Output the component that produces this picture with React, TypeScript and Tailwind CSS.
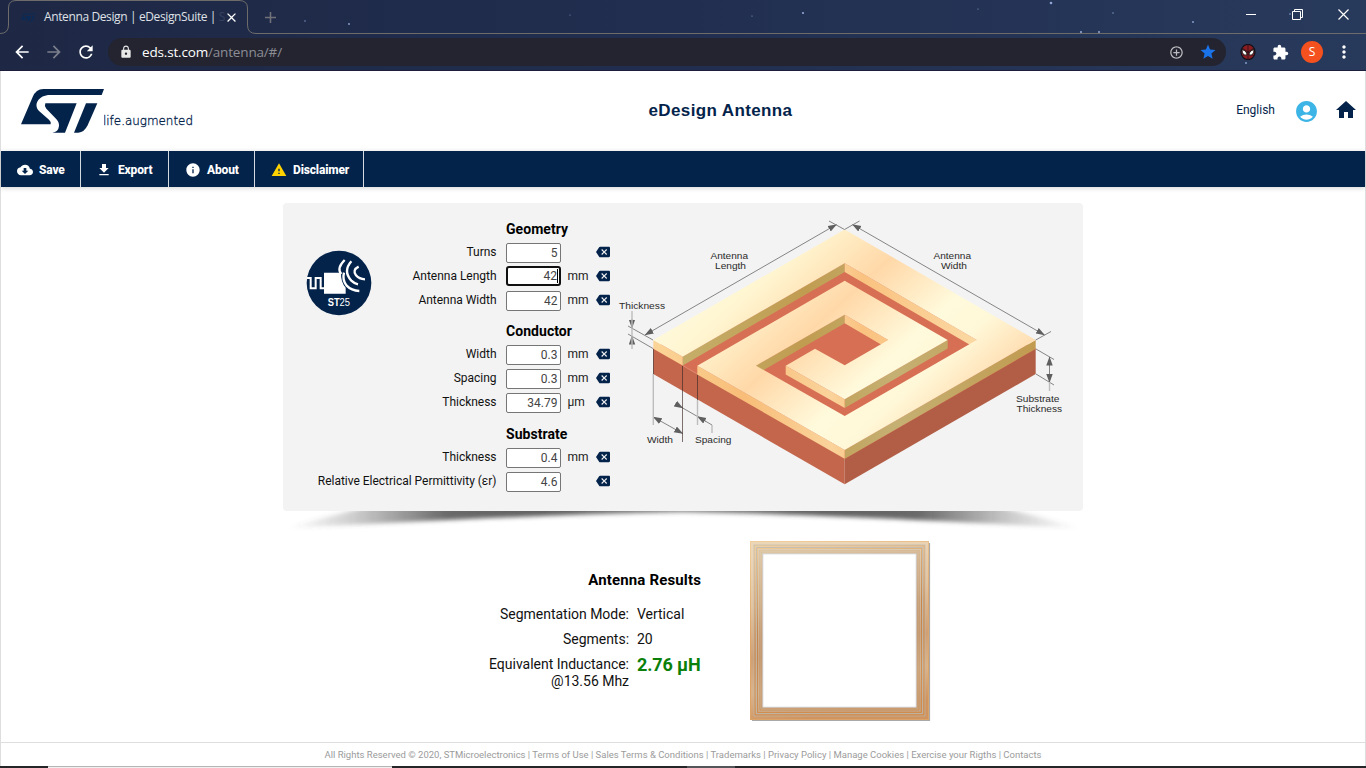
import React from "react";
import {
  MdAccountCircle,
  MdArrowBack,
  MdArrowForward,
  MdBackspace,
  MdClose,
  MdCloudDownload,
  MdExtension,
  MdFileDownload,
  MdHome,
  MdInfo,
  MdLock,
  MdMoreVert,
  MdAdd,
  MdRefresh,
  MdStar,
  MdWarning,
  MdAddCircleOutline,
} from "react-icons/md";

type Field = { label: string; value: string; unit?: string; focused?: boolean };

const geometry: Field[] = [
  { label: "Turns", value: "5" },
  { label: "Antenna Length", value: "42", unit: "mm", focused: true },
  { label: "Antenna Width", value: "42", unit: "mm" },
];
const conductor: Field[] = [
  { label: "Width", value: "0.3", unit: "mm" },
  { label: "Spacing", value: "0.3", unit: "mm" },
  { label: "Thickness", value: "34.79", unit: "µm" },
];
const substrate: Field[] = [
  { label: "Thickness", value: "0.4", unit: "mm" },
  { label: "Relative Electrical Permittivity (εr)", value: "4.6" },
];

const stars = [
  [305, 21, 0.7], [349, 24, 0.9], [1051, 3, 1.3], [1113, 13, 0.7], [1193, 22, 0.9],
  [1081, 32, 1.1], [1099, 32, 1], [803, 13, 1.1], [752, 16, 0.6], [978, 9, 0.6],
  [1246, 63, 0.9], [570, 15, 0.5], [1290, 14, 0.8],
];

function StMark({ className, color }: { className: string; color: string }) {
  return (
    <svg className={className} viewBox="63 51 249 132" fill={color}>
      <path d="M63 157 L98 75 Q108 51 130 51 H312 L305 69 H150 C116 69 98 98 118 118 L147 143 Q155 150 152 157 Z" />
      <path d="M136 94 H230 L195 182 H157 Q175 180 177 162 Q178 150 168 140 L139 110 Q132 102 136 94 Z" />
      <path d="M258 94 H292 L263 160 Q252 182 235 182 H222 Z" />
    </svg>
  );
}

function Browser() {
  return (
    <div className="relative flex h-[71px] shrink-0 flex-col bg-gradient-to-r from-[#1e2845] via-[#212e4f] to-[#283a5c] font-['Open_Sans',sans-serif]">
      <svg className="absolute inset-0" width="1366" height="71" fill="none">
        {stars.map(([x, y, r]) => (
          <circle key={`${x}-${y}`} cx={x} cy={y} r={r} fill="#8fa6d6" />
        ))}
        <path
          d="M0 33.5 Q8.5 33.5 8.5 25 V8 Q8.5 .5 16 .5 H239 Q247.5 .5 247.5 8 V25 Q247.5 33.5 256 33.5 H1366"
          stroke="#6e6c6b"
        />
        <path d="M0 70.5 H1366" stroke="#1d1d3c" />
      </svg>
      <div className="relative flex h-[34px] items-center">
        <StMark className="ml-[21px] h-[9px] w-[15px] shrink-0" color="#0b2a55" />
        <span className="ml-[8px] w-[178px] whitespace-nowrap text-[12px] tracking-[-0.38px] text-[#dfe1e6]">
          Antenna Design | eDesignSuite | <span className="text-[#36415f]">S</span>
        </span>
        <MdClose className="ml-[2px] size-[15px] shrink-0 text-white" />
        <MdAdd className="ml-[22px] size-[19px] shrink-0 text-[#6f7078]" />
        <div className="ml-auto flex items-center pb-[5px] text-white">
          <span className="mr-[36px] h-px w-[10px] bg-white" />
          <svg className="mr-[35px] size-[11px]" viewBox="0 0 11 11" fill="none" stroke="white">
            <path d="M.5 2.5 H8.5 V10.5 H.5 Z M2.5 2.5 V.5 H10.5 V8.5 H8.5" />
          </svg>
          <svg className="mr-[17px] size-[11px]" viewBox="0 0 11 11" stroke="white" strokeWidth="1.2">
            <path d="M.5 .5 L10.5 10.5 M10.5 .5 L.5 10.5" />
          </svg>
        </div>
      </div>
      <div className="relative flex h-[36px] items-center">
        <MdArrowBack className="ml-[12px] size-[20px] text-white" />
        <MdArrowForward className="ml-[12px] size-[20px] text-[#7b7f8b]" />
        <MdRefresh className="ml-[12px] size-[20px] text-white" />
        <div className="ml-[12px] flex h-[28px] w-[1118px] items-center rounded-full bg-[#232430]">
          <MdLock className="ml-[11px] size-[14px] text-[#e8e8e8]" />
          <span className="ml-[9px] text-[13.5px] tracking-[-0.17px] text-white">
            eds.st.com<span className="text-[#8c8d95]">/antenna/#/</span>
          </span>
          <MdAddCircleOutline className="ml-auto size-[15px] text-[#bcbcc0]" />
          <MdStar className="ml-[15px] mr-[9px] size-[18px] text-[#1a73e8]" />
        </div>
        <svg className="ml-[14px] h-[16px] w-[16px]" viewBox="0 0 16 16">
          <ellipse cx="8" cy="8" rx="7" ry="7.6" fill="#8b1d22" stroke="#141018" strokeWidth="1.2" />
          <path d="M8 1 V15 M2 4 L14 12 M14 4 L2 12" stroke="#25111a" strokeWidth=".8" />
          <path d="M2 5.5 Q7 7 7 11 Q2 12 2 5.5 Z M14 5.5 Q9 7 9 11 Q14 12 14 5.5 Z" fill="white" stroke="#111" strokeWidth=".9" />
        </svg>
        <MdExtension className="ml-[16px] size-[17px] text-white" />
        <span className="ml-[12px] flex size-[22px] items-center justify-center rounded-full bg-[#f4511e] text-[12px] text-white">
          S
        </span>
        <MdMoreVert className="ml-[11px] size-[20px] text-white" />
      </div>
    </div>
  );
}

function Header() {
  return (
    <header className="grid h-[80px] shrink-0 grid-cols-3 items-center">
      <div className="flex items-end pl-[20px]">
        <StMark className="h-[44px] w-[83px]" color="#03234b" />
        <svg className="h-[20px] w-[92px]" viewBox="0 0 92 20">
          <text
            x="-1"
            y="12"
            textLength="90"
            fontFamily="DejaVu Sans"
            fontWeight="200"
            fontSize="12"
            fill="#03234b"
            stroke="#03234b"
            strokeWidth=".3"
            lengthAdjust="spacingAndGlyphs"
          >
            life.augmented
          </text>
        </svg>
      </div>
      <h1 className="pl-[75px] text-center font-['Liberation_Sans',sans-serif] text-[17px] font-bold tracking-[0.38px] text-[#03234b]">
        eDesign Antenna
      </h1>
      <div className="flex items-center justify-end pr-[7px] text-[#03234b]">
        <span className="pb-[2px] text-[12px]">English</span>
        <MdAccountCircle className="ml-[19px] size-[25px] text-[#3cb4e6]" />
        <MdHome className="mb-[2px] ml-[15px] size-[24px]" />
      </div>
    </header>
  );
}

function Toolbar() {
  const item =
    "flex h-full items-center border-r border-[#d5d9e0] pt-px text-[12px] font-extrabold tracking-[-0.15px] text-white";
  return (
    <nav className="flex h-[36px] shrink-0 bg-[#03234b] shadow-[0_1px_5px_rgba(0,0,0,0.18)]">
      <div className={`${item} w-[80px] pl-[16px]`}>
        <MdCloudDownload className="mr-[6px] size-[16px]" />
        Save
      </div>
      <div className={`${item} w-[88px] pl-[15px]`}>
        <MdFileDownload className="mr-[6px] size-[16px]" />
        Export
      </div>
      <div className={`${item} w-[86px] pl-[16px]`}>
        <MdInfo className="mr-[6px] size-[16px]" />
        About
      </div>
      <div className={`${item} w-[109px] pl-[16px]`}>
        <MdWarning className="mr-[6px] size-[16px] text-[#ffd200]" />
        Disclaimer
      </div>
    </nav>
  );
}

function FieldGroup({ title, fields, className }: { title: string; fields: Field[]; className?: string }) {
  return (
    <section className={className}>
      <h2 className="flex h-[28px] items-center pl-[223px] text-[14px] font-bold tracking-[0.05px] text-black">
        {title}
      </h2>
      {fields.map((f) => (
        <div key={f.label} className="flex h-[24px] items-start">
          <label className="w-[213.5px] shrink-0 whitespace-nowrap text-right text-[12px] leading-[18px] tracking-[-0.02px] text-[#111]">
            {f.label}
          </label>
          <span className={f.focused ? "relative -mt-px ml-[9.5px] flex h-[20px] w-[56px]" : "relative ml-[9.5px] flex h-[20px] w-[56px]"}>
            <input
              readOnly
              defaultValue={f.value}
              className={
                f.focused
                  ? "h-[20px] w-[55px] rounded-[3px] border-2 border-[#101010] bg-white pr-[2px] text-right text-[12px] text-[#444] outline-none"
                  : "h-[20px] w-[55px] rounded-[2px] border border-[#767676] bg-white pr-[2.5px] text-right text-[12px] text-[#444] outline-none"
              }
            />
            {f.focused && <span className="absolute right-[4px] top-[3px] h-[14px] w-px bg-black" />}
          </span>
          <span className="ml-[5.5px] w-[28.5px] text-[12px] leading-[18px] text-[#222]">{f.unit}</span>
          <MdBackspace className="mt-[2px] size-[14px] text-[#03234b]" />
        </div>
      ))}
    </section>
  );
}

function St25Badge() {
  return (
    <svg className="size-[66px]" viewBox="70 150 198 198">
      <circle cx="169" cy="249" r="97" fill="#03234b" />
      <g fill="none" stroke="white">
        <path d="M73 234 H84 V265 H99 V234 H114 V265 H126" strokeWidth="6" />
        <path d="M186 180 Q161 205 176 222 M206 184 Q180 214 206 242 Q214 250 226 253" strokeWidth="7" />
        <path d="M228 200 Q208 210 220 226 Q229 237 247 238" strokeWidth="7" />
        <path d="M184 218 Q178 240 192 257 Q206 272 230 273" strokeWidth="7" />
      </g>
      <path d="M124 218 H175 Q174 246 189 263 V281 H124 Z" fill="white" />
      <text x="135" y="318" fontSize="31" fill="white" fontFamily="Liberation Sans" textLength="67" lengthAdjust="spacingAndGlyphs">
        <tspan fontWeight="bold">ST</tspan>25
      </text>
    </svg>
  );
}

function Label({ x, y, w, children }: { x: number; y: number; w: number; children: string }) {
  return (
    <text
      x={x}
      y={y}
      textLength={w}
      lengthAdjust="spacingAndGlyphs"
      fontSize="9.5"
      fontFamily="Liberation Sans"
      fill="#2b2b2b"
    >
      {children}
    </text>
  );
}

const olive = "url(#olive)";
const amber = "url(#amber)";

function AntennaDiagram() {
  return (
    <svg className="h-[308px] w-[473px] shrink-0" viewBox="610 203 473 308">
      <defs>
        <linearGradient id="top" gradientUnits="userSpaceOnUse" x1="653" y1="340" x2="828" y2="533">
          <stop offset="0" stopColor="#fff9da" />
          <stop offset=".12" stopColor="#fff5d0" />
          <stop offset=".38" stopColor="#ffd8a8" />
          <stop offset=".66" stopColor="#fffadc" />
          <stop offset=".8" stopColor="#fff8d8" />
          <stop offset="1" stopColor="#ffdcb0" />
        </linearGradient>
        <linearGradient id="olive" gradientUnits="userSpaceOnUse" x1="682" y1="0" x2="1036" y2="0">
          <stop offset="0" stopColor="#c5ae6a" />
          <stop offset=".35" stopColor="#c09c50" />
          <stop offset=".6" stopColor="#c5b073" />
          <stop offset="1" stopColor="#c19b50" />
        </linearGradient>
        <linearGradient id="amber" gradientUnits="userSpaceOnUse" x1="653" y1="0" x2="976" y2="0">
          <stop offset="0" stopColor="#fbd598" />
          <stop offset=".28" stopColor="#f8bd78" />
          <stop offset=".55" stopColor="#fad39b" />
          <stop offset=".65" stopColor="#fac280" />
          <stop offset="1" stopColor="#fbd8a2" />
        </linearGradient>
        <marker id="arrow" markerUnits="userSpaceOnUse" markerWidth="9" markerHeight="7" refX="8.5" refY="3.2" orient="auto-start-reverse">
          <path d="M0 0 L9 3.2 L0 6.4 Z" fill="#5f5f5f" />
        </marker>
      </defs>
      <path d="M653.3 348 L844.7 458 V484.3 L653.3 374 Z" fill="#c3664c" />
      <path d="M1035.7 348 L844.7 458 V484.3 L1035.7 374 Z" fill="#b25e46" />
      <path d="M653.3 349 L844.7 239 L1035.7 349 L844.7 459 Z" fill="#d66f54" />
      <path d="M682.7 365.5 L697.3 374" stroke="#e2917b" strokeWidth=".8" />
      <g fill={olive}>
        <path d="M682.7 356.7 L844.7 263.3 V272 L682.7 365.4 Z" />
        <path d="M756 365.7 L844.7 314.7 V323.3 L756 374.4 Z" />
        <path d="M844.7 399.3 L947.7 340 V348.5 L844.7 408 Z" />
        <path d="M844.7 450 L1035.7 340 V348.7 L844.7 458.8 Z" />
      </g>
      <g fill={amber}>
        <path d="M653.3 340 L682.7 356.7 V365.4 L653.3 348.7 Z" />
        <path d="M697.3 365.7 L844.7 450 V458.8 L697.3 374.4 Z" />
        <path d="M844.7 263.3 L976.7 340 V348.7 L844.7 272 Z" />
        <path d="M844.7 314.7 L888.3 340 V348.7 L844.7 323.3 Z" />
        <path d="M785.7 365.7 L844.7 399.3 V408 L785.7 374.4 Z" />
      </g>
      <path
        fill="url(#top)"
        d="M653.3 340 L844.7 229.5 L1035.7 340 L844.7 450 L697.3 365.7 L844.7 280.7 L947.7 340 L844.7 399.3 L785.7 365.7 L815 348.8 L844.7 365.2 L888.3 340 L844.7 314.7 L756 365.7 L844.7 416 L976.7 340 L844.7 263.3 L682.7 356.7 Z"
      />
      <g stroke="#858585" fill="none" strokeWidth="1">
        <path d="M645 335 L836.5 224.5" markerStart="url(#arrow)" markerEnd="url(#arrow)" />
        <path d="M852.5 224.5 L1044.5 335" markerStart="url(#arrow)" markerEnd="url(#arrow)" />
        <path d="M829 221 L844.5 229.5 L859.5 221 M628 326 L653 340 M628 334 L653 348.5 M1035.7 340 L1051 331.5 M1036 349 L1054 359.5 M1036 374 L1054 385" />
        <path d="M653.3 417 L682.7 433.5" markerStart="url(#arrow)" markerEnd="url(#arrow)" />
        <path d="M682.7 408 L697.5 416.5 L712 425" />
        <path d="M676 404 L682.7 408" markerEnd="url(#arrow)" />
        <path d="M706 421.5 L697.5 416.5" markerEnd="url(#arrow)" />
        <path d="M1049.5 357 V382.5" markerStart="url(#arrow)" markerEnd="url(#arrow)" />
        <path d="M632 319 V328" markerEnd="url(#arrow)" />
        <path d="M632 345 V336" markerEnd="url(#arrow)" />
      </g>
      <path d="M632 311 V349 M653.3 374 V425 M697.5 400 V425 M712 425 V433 M1049.5 382 V391" stroke="#bdbdbd" strokeWidth="1.4" />
      <path d="M653.5 349 V374 M682.5 366 V442 M697.5 375 V400" stroke="#3d2b28" strokeOpacity=".65" />
      <Label x={710.5} y={259} w={37.5}>Antenna</Label>
      <Label x={715} y={269} w={31}>Length</Label>
      <Label x={933.5} y={259} w={37.5}>Antenna</Label>
      <Label x={941} y={269} w={26}>Width</Label>
      <Label x={619} y={309} w={46}>Thickness</Label>
      <Label x={647} y={443} w={26}>Width</Label>
      <Label x={695} y={443} w={36.5}>Spacing</Label>
      <Label x={1016} y={402} w={43.5}>Substrate</Label>
      <Label x={1016.5} y={412} w={45.5}>Thickness</Label>
    </svg>
  );
}

function PanelShadow() {
  return (
    <svg className="h-[24px] w-[800px] shrink-0" viewBox="283 511 800 24">
      <defs>
        <linearGradient id="fade" x1="0" x2="1" y1="0" y2="0">
          <stop offset="0" stopColor="#555" stopOpacity="0" />
          <stop offset=".08" stopColor="#555" stopOpacity=".28" />
          <stop offset=".2" stopColor="#444" stopOpacity=".8" />
          <stop offset=".34" stopColor="#444" stopOpacity=".85" />
          <stop offset=".5" stopColor="#555" stopOpacity=".75" />
          <stop offset=".66" stopColor="#444" stopOpacity=".85" />
          <stop offset=".8" stopColor="#444" stopOpacity=".8" />
          <stop offset=".92" stopColor="#555" stopOpacity=".28" />
          <stop offset="1" stopColor="#555" stopOpacity="0" />
        </linearGradient>
        <filter id="soft" x="-5%" y="-100%" width="110%" height="300%">
          <feGaussianBlur stdDeviation="4 2.2" />
        </filter>
      </defs>
      <path
        d="M288 528 C330 516 350 511 380 504 H986 C1016 511 1036 516 1078 528 C970 523 820 514 683 512 C546 514 396 523 288 528 Z"
        fill="url(#fade)"
        filter="url(#soft)"
      />
    </svg>
  );
}

const turnOffsets = [3.5, 6, 8.5, 10.5];

function CoilPreview() {
  return (
    <svg className="-ml-px h-[181px] w-[181px]" viewBox="0 0 181 181" fill="none">
      <defs>
        <linearGradient id="copper" x1=".35" y1="0" x2=".5" y2="1">
          <stop offset="0" stopColor="#ecd6b8" />
          <stop offset=".3" stopColor="#e2c4a0" />
          <stop offset=".6" stopColor="#d0a075" />
          <stop offset=".8" stopColor="#dcb48a" />
          <stop offset="1" stopColor="#cf9460" />
        </linearGradient>
        <linearGradient id="wire" x1="0" y1="0" x2=".2" y2="1">
          <stop offset="0" stopColor="#efc58a" />
          <stop offset=".5" stopColor="#c07a3c" />
          <stop offset="1" stopColor="#d08a48" />
        </linearGradient>
        <linearGradient id="edge" x1="0" y1="0" x2=".2" y2="1">
          <stop offset="0" stopColor="#f0cf9c" />
          <stop offset=".5" stopColor="#dda56c" />
          <stop offset="1" stopColor="#dba368" />
        </linearGradient>
      </defs>
      <path d="M2 179.5 H179.5 V2" stroke="#a9a9a9" strokeWidth="1.2" />
      <rect x="6.5" y="6.5" width="166" height="166" stroke="url(#copper)" strokeWidth="12" />
      <rect x=".5" y=".5" width="178" height="178" stroke="url(#edge)" />
      {turnOffsets.map((o) => (
        <React.Fragment key={o}>
          <rect x={o + 0.6} y={o + 0.6} width={177.8 - 2 * o} height={177.8 - 2 * o} stroke="#bbb8b0" strokeWidth=".8" />
          <rect x={o + 1.5} y={o + 1.5} width={176 - 2 * o} height={176 - 2 * o} stroke="url(#wire)" strokeWidth=".8" />
        </React.Fragment>
      ))}
      <rect x="12.8" y="12.8" width="153.4" height="153.4" stroke="#c6c8cc" strokeWidth=".9" />
    </svg>
  );
}

function Results() {
  return (
    <div className="flex pl-[470px] pt-[6px]">
      <div className="w-[280px] pt-[29px] text-[14px] leading-[17px] tracking-[-0.02px] text-[#111]">
        <h2 className="w-[230px] text-right text-[15px] font-bold leading-[20px] tracking-[0.15px] text-black">
          Antenna Results
        </h2>
        <div className="mt-[16px] grid grid-cols-[158px_1fr] gap-x-[8px] gap-y-[8px]">
          <span className="text-right">Segmentation Mode:</span>
          <span>Vertical</span>
          <span className="text-right">Segments:</span>
          <span>20</span>
          <span className="text-right">
            Equivalent Inductance:
            <br />
            @13.56 Mhz
          </span>
          <span className="text-[18px] font-bold tracking-[-0.15px] text-[#0a800a]">2.76 µH</span>
        </div>
      </div>
      <CoilPreview />
    </div>
  );
}

export default function App() {
  return (
    <div className="flex h-[768px] w-[1366px] flex-col overflow-hidden bg-white font-['Roboto',sans-serif]">
      <Browser />
      <div className="flex h-[695px] flex-col border-x border-[#dedede]">
        <Header />
        <Toolbar />
        <main className="flex h-[555px] shrink-0 flex-col pt-[16px]">
          <div className="ml-[282px] flex h-[308px] w-[800px] shrink-0 rounded-[4px] bg-[#f3f3f3]">
            <div className="relative w-[327px] pt-[12px]">
              <div className="absolute left-[23px] top-[47px]">
                <St25Badge />
              </div>
              <FieldGroup title="Geometry" fields={geometry} />
              <FieldGroup title="Conductor" fields={conductor} className="mt-[2px]" />
              <FieldGroup title="Substrate" fields={substrate} className="mt-[3px]" />
            </div>
            <AntennaDiagram />
          </div>
          <div className="ml-[282px] flex">
            <PanelShadow />
          </div>
          <Results />
        </main>
        <footer className="flex h-[24px] shrink-0 items-center justify-center border-t border-[#dedede] pt-[2px] text-[9.5px] text-[#9b9b9b]">
          All Rights Reserved © 2020, STMicroelectronics | Terms of Use | Sales Terms &amp; Conditions | Trademarks |
          Privacy Policy | Manage Cookies | Exercise your Rigths | Contacts
        </footer>
      </div>
      <div className="flex h-[2px] shrink-0 bg-[#252628]">
        <div className="ml-[48px] h-[2px] w-[344px] border-t border-[#b5b5b5] bg-[#f0f0f0]" />
        <div className="ml-[295px] h-[2px] w-[48px] bg-[#55565a]" />
      </div>
    </div>
  );
}
